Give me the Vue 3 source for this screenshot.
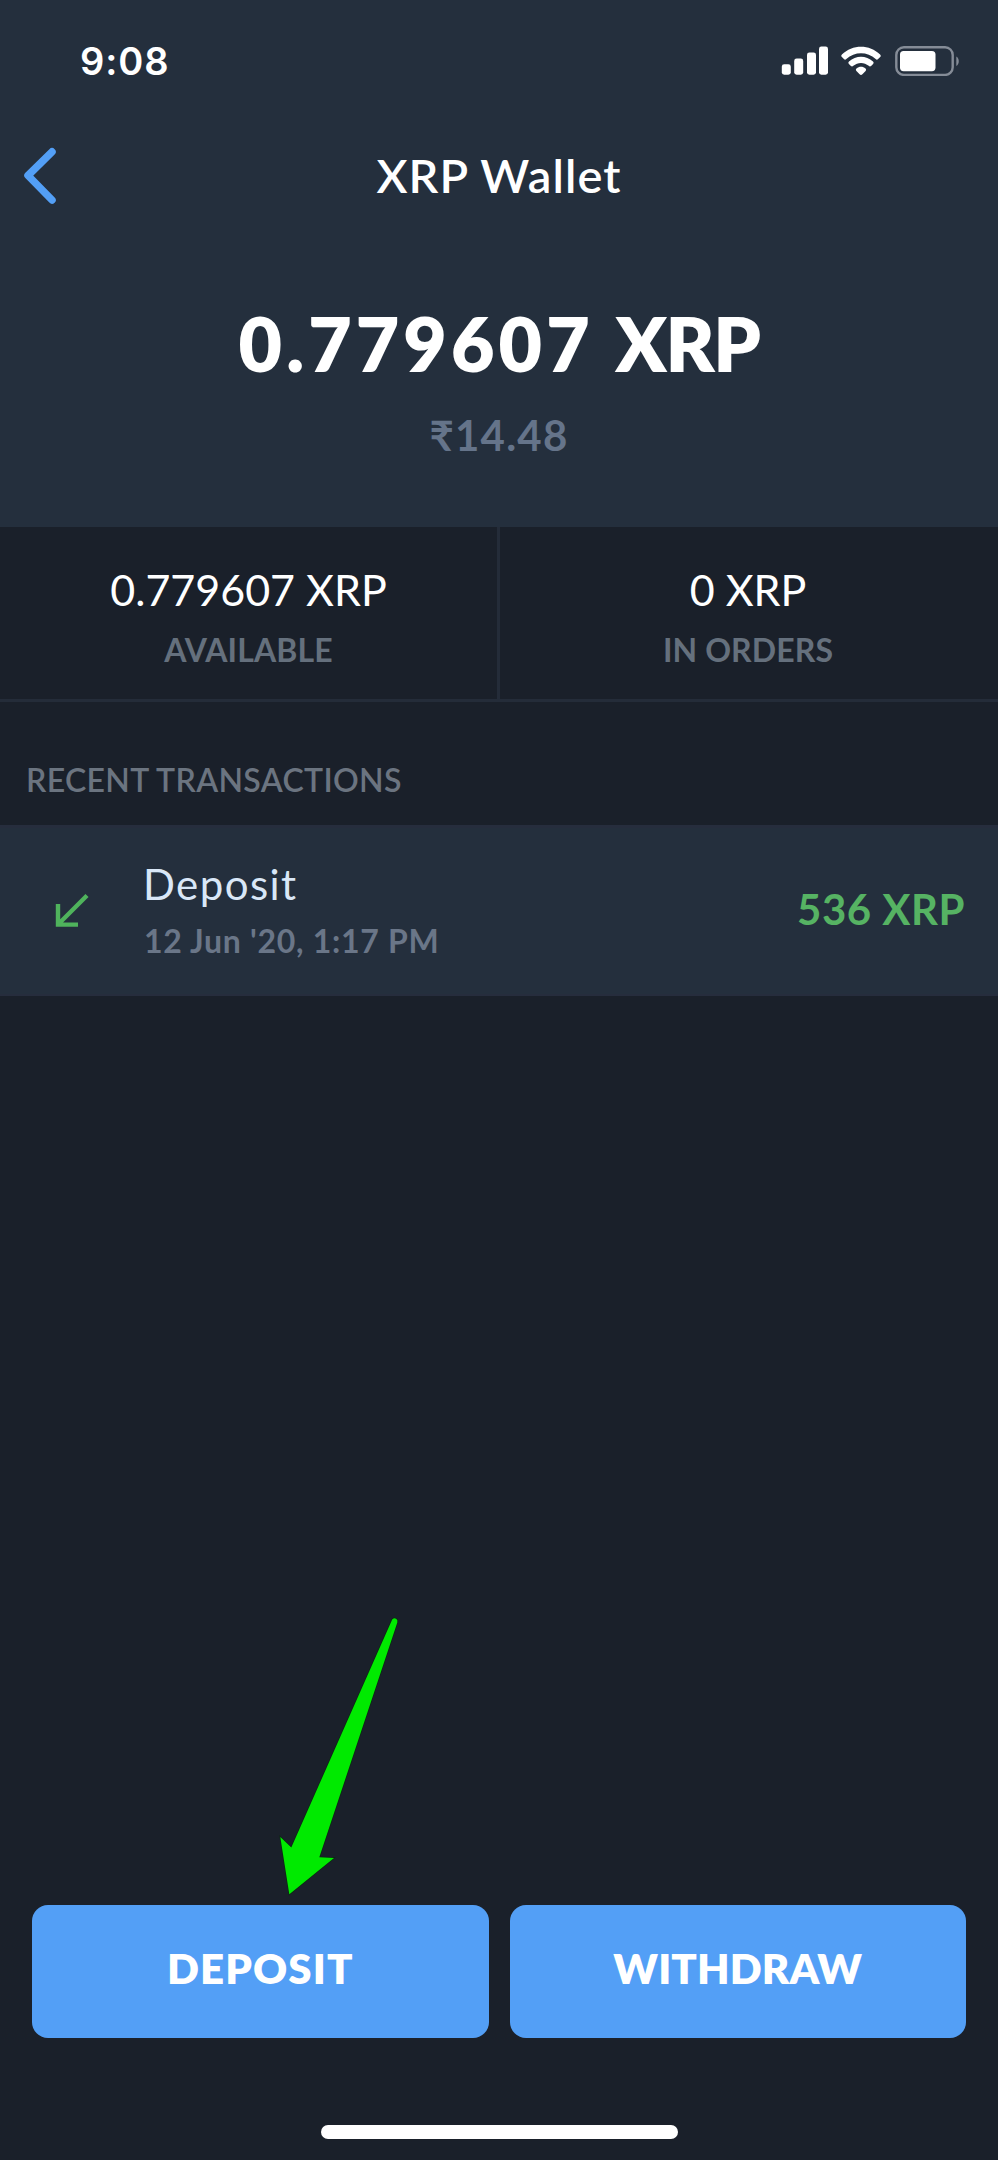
<script setup>
const balance = { amount: '0.779607', currency: 'XRP', fiat: '₹14.48' }
const stats = [
  { value: '0.779607 XRP', label: 'AVAILABLE' },
  { value: '0 XRP', label: 'IN ORDERS' },
]
const transactions = [
  { type: 'Deposit', date: "12 Jun '20, 1:17 PM", amount: '536 XRP' },
]
</script>

<template>
  <div class="screen">
    <header class="header">
      <div class="status">
        <span class="time">9:08</span>
        <div class="status-icons">
          <svg class="signal" width="47" height="30" viewBox="0 0 47 30">
            <rect x="0.8" y="18.3" width="9" height="10.4" rx="2.4" />
            <rect x="13.2" y="12.5" width="9" height="16.2" rx="2.4" />
            <rect x="26" y="6.4" width="9" height="22.3" rx="2.4" />
            <rect x="38" y="0.6" width="9" height="28.1" rx="2.4" />
          </svg>
          <svg class="wifi" width="40" height="30" viewBox="0 0 40 30">
            <path d="M0.9 8.5C11.5 -1.9 28.5 -1.9 39.1 8.5C40 9.5 39.9 10.3 39.2 11.1L37.1 13.1C36.3 13.8 35.5 13.8 34.7 13.1C26.4 5.3 13.6 5.3 5.3 13.1C4.5 13.8 3.7 13.8 2.9 13.1L0.9 11.1C0.1 10.3 0 9.5 0.9 8.5Z" />
            <path d="M8 15.5C14.8 9.2 25.2 9.2 32 15.5C32.9 16.4 32.8 17.1 32.1 17.9L30.1 19.9C29.3 20.6 28.5 20.5 27.7 19.8C23.3 15.9 16.7 15.9 12.3 19.8C11.5 20.5 10.7 20.6 9.9 19.9L7.9 17.9C7.2 17.1 7.1 16.4 8 15.5Z" />
            <path d="M15.5 22.5C18 20.3 22 20.3 24.5 22.5C25.3 23.2 25.3 24.2 24.6 25L21.4 28.2C20.5 29.1 19.5 29.1 18.6 28.2L15.4 25C14.7 24.2 14.7 23.2 15.5 22.5Z" />
          </svg>
          <svg class="battery" width="66" height="30" viewBox="0 0 66 30">
            <rect class="battery-shell" x="1.3" y="1.3" width="56.4" height="27.6" rx="7.6" />
            <rect x="5" y="5" width="35.5" height="20.2" rx="3.6" />
            <path class="battery-tip" d="M61.3 10.5C64.6 12.2 64.6 18.2 61.3 20Z" />
          </svg>
        </div>
      </div>

      <nav class="nav">
        <svg class="back" width="36" height="60" viewBox="0 0 36 60">
          <path d="M30 5.8L6 29.5L30 54" />
        </svg>
        <h1 class="title">XRP Wallet</h1>
      </nav>

      <div class="balance">{{ balance.amount }} <span class="currency">{{ balance.currency }}</span></div>
      <div class="fiat">{{ balance.fiat }}</div>
    </header>

    <section class="stats">
      <div v-for="stat in stats" :key="stat.label" class="stat">
        <div class="stat-value">{{ stat.value }}</div>
        <div class="stat-label">{{ stat.label }}</div>
      </div>
    </section>

    <h2 class="section-title">RECENT TRANSACTIONS</h2>

    <ul class="transactions">
      <li v-for="tx in transactions" :key="tx.date" class="tx">
        <svg class="tx-icon" width="36" height="36" viewBox="0 0 36 36">
          <path d="M33 2.5L4.5 31M4 11V31.6H24" />
        </svg>
        <div class="tx-info">
          <div class="tx-type">{{ tx.type }}</div>
          <div class="tx-date">{{ tx.date }}</div>
        </div>
        <div class="tx-amount">{{ tx.amount }}</div>
      </li>
    </ul>

    <footer class="footer">
      <div class="actions">
        <button class="action">
          <span class="action-deposit">DEPOSIT</span>
          <svg class="pointer" width="130" height="290" viewBox="270 1610 130 290">
            <path d="M392.2 1619.5Q395 1617 397.3 1620L397.3 1622.5L319.3 1857.3L334 1858L289.3 1894.3L280.3 1837L291.3 1847.5Z" />
          </svg>
        </button>
        <button class="action">
          <span class="action-withdraw">WITHDRAW</span>
        </button>
      </div>
      <div class="home-indicator"></div>
    </footer>
  </div>
</template>

<style>
body {
  margin: 0;
  background: #1a202a;
}
</style>

<style scoped>
.screen {
  display: flex;
  flex-direction: column;
  width: 998px;
  height: 2160px;
  box-sizing: border-box;
  overflow: hidden;
  background: #1a202a;
  color: #fff;
  font-family: Lato, "Liberation Sans", sans-serif;
}

.header {
  height: 527px;
  background: #242f3d;
}

.status {
  display: flex;
  align-items: center;
  justify-content: space-between;
  height: 122px;
  padding: 0 37px 0 80px;
}

.time {
  font: 600 38px/46px Inter, "Liberation Sans", sans-serif;
  letter-spacing: 0.9px;
}

.status-icons {
  display: flex;
  align-items: center;
  fill: #fff;
}

.wifi {
  margin-left: 13px;
}

.battery {
  margin-left: 14px;
}

.battery-shell {
  fill: none;
  stroke: #858c97;
  stroke-width: 2.4;
}

.battery-tip {
  fill: #858c97;
}

.nav {
  display: grid;
  grid-template-columns: 60px 1fr 60px;
  align-items: center;
  height: 108px;
}

.back {
  margin-left: 22px;
  fill: none;
  stroke: #539ff6;
  stroke-width: 7.5;
  stroke-linecap: round;
  stroke-linejoin: round;
}

.title {
  margin: 0 0 3px;
  text-align: center;
  font-size: 47px;
  line-height: 56px;
  font-weight: 600;
  letter-spacing: 1.1px;
}

.balance {
  margin-top: 69px;
  text-align: center;
  font-size: 75px;
  line-height: 88px;
  font-weight: 800;
  letter-spacing: 4.1px;
}

.currency {
  letter-spacing: -1.5px;
}

.fiat {
  margin-top: 23px;
  text-align: center;
  font-size: 42px;
  line-height: 50px;
  font-weight: 700;
  letter-spacing: 1.2px;
  color: #65748a;
}

.stats {
  display: grid;
  grid-template-columns: 1fr 1fr;
  height: 175px;
  box-sizing: border-box;
  border-bottom: 3px solid #242c39;
}

.stat {
  padding: 37px 2px 0 0;
  text-align: center;
}

.stat + .stat {
  margin-left: -2px;
  border-left: 3px solid #242c39;
}

.stat-value {
  font-size: 43px;
  line-height: 52px;
}

.stat-label {
  margin-top: 15px;
  font-size: 32px;
  line-height: 38px;
  font-weight: 700;
  letter-spacing: 0.1px;
  color: #65707d;
}

.section-title {
  margin: 59px 0 26px 26px;
  font-size: 32px;
  line-height: 38px;
  font-weight: 600;
  letter-spacing: 0.35px;
  color: #6b7480;
}

.transactions {
  margin: 0;
  padding: 0;
  list-style: none;
}

.tx {
  display: flex;
  align-items: center;
  height: 171px;
  box-sizing: border-box;
  padding: 0 33px 0 54px;
  background: #242f3d;
  border-top: 3px solid #262d3d;
  border-bottom: 2px solid #262d3d;
}

.tx-icon {
  fill: none;
  stroke: #4fb35c;
  stroke-width: 4.4;
}

.tx-info {
  flex: 1;
  margin-left: 53px;
  margin-bottom: 3px;
}

.tx-type {
  font-size: 42px;
  line-height: 50px;
  letter-spacing: 1.43px;
  color: #d9e7f7;
}

.tx-date {
  margin-top: 13px;
  padding-left: 1px;
  font-size: 32px;
  line-height: 38px;
  font-weight: 700;
  letter-spacing: 0.7px;
  color: #6a7688;
}

.tx-amount {
  margin-bottom: 5px;
  font-size: 42px;
  line-height: 50px;
  font-weight: 700;
  letter-spacing: 0.5px;
  color: #56b363;
}

.footer {
  margin-top: auto;
  padding: 0 32px 21px;
}

.actions {
  display: grid;
  grid-template-columns: 1fr 1fr;
  gap: 21px;
}

.action {
  position: relative;
  height: 133px;
  margin: 0;
  padding: 0 0 7px;
  border: 0;
  border-radius: 16px;
  background: #539ff6;
  color: #fff;
  font: 800 42px/50px Lato, "Liberation Sans", sans-serif;
}

.action-deposit {
  letter-spacing: 1.12px;
}

.action-withdraw {
  letter-spacing: 0.11px;
}

/* Callout arrow hovering above the deposit button */
.pointer {
  position: absolute;
  left: 238px;
  bottom: 138px;
  fill: #00ea00;
  stroke: #0b2a12;
  stroke-width: 1.5;
  paint-order: stroke;
}

.home-indicator {
  width: 357px;
  height: 14px;
  margin: 87px auto 0;
  border-radius: 7px;
  background: #fff;
}
</style>
